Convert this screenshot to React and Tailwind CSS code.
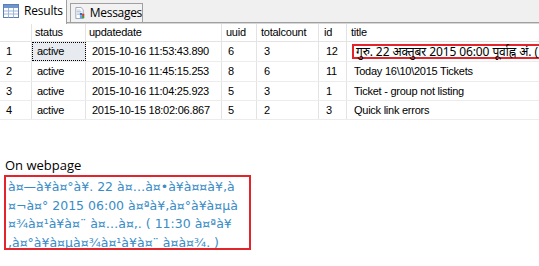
const rows = [
  { n: 1, status: 'active', date: '2015-10-16 11:53:43.890', uuid: '6', total: '3', id: '12', title: 'गुरु. 22 अक्तुबर 2015 06:00 पूर्वाह्न अं. ( 11:30 पूर्वाह्न भा. )', h: 'h-[20px]' },
  { n: 2, status: 'active', date: '2015-10-16 11:45:15.253', uuid: '8', total: '6', id: '11', title: 'Today 16\\10\\2015 Tickets', h: 'h-[20px]' },
  { n: 3, status: 'active', date: '2015-10-16 11:04:25.923', uuid: '5', total: '3', id: '1', title: 'Ticket - group not listing', h: 'h-[19px]' },
  { n: 4, status: 'active', date: '2015-10-15 18:02:06.867', uuid: '5', total: '2', id: '3', title: 'Quick link errors', h: 'h-[19px]' },
];

const cols = 'grid grid-cols-[32px_54px_136px_35px_62px_28px_1fr]';

function ResultsIcon() {
  return (
    <svg width="16" height="14" viewBox="0 0 16 14">
      <rect x="0.5" y="0.5" width="15" height="13" fill="#ffffff" stroke="#5a7fb5" />
      <rect x="1" y="1" width="14" height="3" fill="#6f95cf" />
      <path d="M1 7h14M1 10h14M5.5 4v9.5M10.5 4v9.5" stroke="#9db6dc" strokeWidth="1" />
    </svg>
  );
}

function MessagesIcon() {
  return (
    <svg width="16" height="16" viewBox="0 0 16 16">
      <path d="M2.5 0.5h7l3 3v12h-10z" fill="#ffffff" stroke="#7d8ea8" />
      <path d="M4 4h5M4 6h6M4 8h6M4 10h4" stroke="#a8b6cc" />
      <rect x="8" y="8" width="3" height="3" fill="#3b6fc4" />
      <rect x="11" y="9" width="3" height="3" fill="#d43c2c" />
      <rect x="8" y="11" width="3" height="4" fill="#6a9edc" />
      <rect x="11" y="12" width="3" height="3" fill="#3c9a3c" />
    </svg>
  );
}

export default function App() {
  return (
    <div className="w-[539px] h-[266px] bg-white overflow-hidden font-['Liberation_Sans',Arial,sans-serif] text-black">
      {/* tab strip */}
      <div className="relative h-[24px] bg-[#f0f0f0] flex items-end">
        <div className="absolute left-0 right-0 bottom-0 h-[2px] border-t border-[#a0a0a0] bg-[#d6d6d6]" />
        <div className="relative z-10 h-[24px] w-[67px] bg-white border-r border-[#a0a0a0] flex items-center gap-[5px] pl-[3px] pb-[2px]">
          <ResultsIcon />
          <span className="text-[12px] font-['Open_Sans',sans-serif] tracking-[-0.2px]">Results</span>
        </div>
        <div className="relative z-10 ml-[3px] mb-[2px] h-[19px] w-[73px] bg-[#f2f2f2] border border-b-0 border-[#a0a0a0] flex items-center gap-[4px] pl-[3px]">
          <MessagesIcon />
          <span className="text-[12px] font-['Open_Sans',sans-serif] tracking-[-0.3px]">Messages</span>
        </div>
      </div>

      {/* results grid */}
      <div className="text-[11px] tracking-[-0.25px] whitespace-nowrap">
        <div className={`${cols} h-[18px] border-b border-[#e3e3e3]`}>
          <div className="border-r border-[#e3e3e3]" />
          <div className="border-r border-[#e3e3e3] pl-[3px] flex items-center">status</div>
          <div className="border-r border-[#e3e3e3] pl-[3px] flex items-center">updatedate</div>
          <div className="border-r border-[#e3e3e3] pl-[4px] flex items-center">uuid</div>
          <div className="border-r border-[#e3e3e3] pl-[4px] flex items-center">totalcount</div>
          <div className="border-r border-[#e3e3e3] pl-[5px] flex items-center">id</div>
          <div className="pl-[4px] flex items-center">title</div>
        </div>
        {rows.map((r) => (
          <div key={r.n} className={`${cols} ${r.h} border-b border-[#ececec]`}>
            <div className="border-r border-[#e3e3e3] pl-[6px] flex items-center">{r.n}</div>
            <div
              className={`border-r border-[#e3e3e3] pl-[5px] flex items-center ${
                r.n === 1 ? 'bg-[#e7ebef] outline-1 outline-dotted outline-black -outline-offset-1' : ''
              }`}
            >
              {r.status}
            </div>
            <div className="border-r border-[#e3e3e3] pl-[6px] flex items-center">{r.date}</div>
            <div className="border-r border-[#e3e3e3] pl-[6px] flex items-center">{r.uuid}</div>
            <div className="border-r border-[#e3e3e3] pl-[7px] flex items-center">{r.total}</div>
            <div className="border-r border-[#e3e3e3] pl-[7px] flex items-center">{r.id}</div>
            <div className="pl-[5px] flex items-center overflow-hidden">
              {r.n === 1 ? (
                <span className="h-[15px] pl-[2px] pr-4 flex items-center border-2 border-r-0 border-[#e3242b] font-['Noto_Sans','Noto_Sans_Devanagari',sans-serif] text-[12px] tracking-[-0.1px]">
                  {r.title}
                </span>
              ) : (
                <span className="pl-[2px]">{r.title}</span>
              )}
            </div>
          </div>
        ))}
      </div>

      {/* webpage output */}
      <div className="mt-[37px] pl-[5px] text-[13px] leading-[16px] font-['Open_Sans',sans-serif]">On webpage</div>
      <div className="ml-[4px] mt-[2px] w-[247px] h-[75px] border-2 border-[#e3242b] pl-[2px] pt-[1px] text-[12.5px] leading-[18.7px] text-[#3a8cc6] font-['DejaVu_Sans',Verdana,sans-serif] whitespace-nowrap overflow-hidden">
        <div>à¤—à¥à¤°à¥. 22 à¤…à¤•à¥à¤¤à¥‚à</div>
        <div>¤¬à¤° 2015 06:00 à¤ªà¥‚à¤°à¥à¤µà</div>
        <div>¤¾à¤¹à¥à¤¨ à¤…à¤‚. ( 11:30 à¤ªà¥</div>
        <div>
          <span className="border-b border-[#3c9a5a]">‚à¤°à¥à¤µ</span>à¤¾à¤¹à¥à¤¨ à¤­à¤¾. )
        </div>
      </div>
    </div>
  );
}
